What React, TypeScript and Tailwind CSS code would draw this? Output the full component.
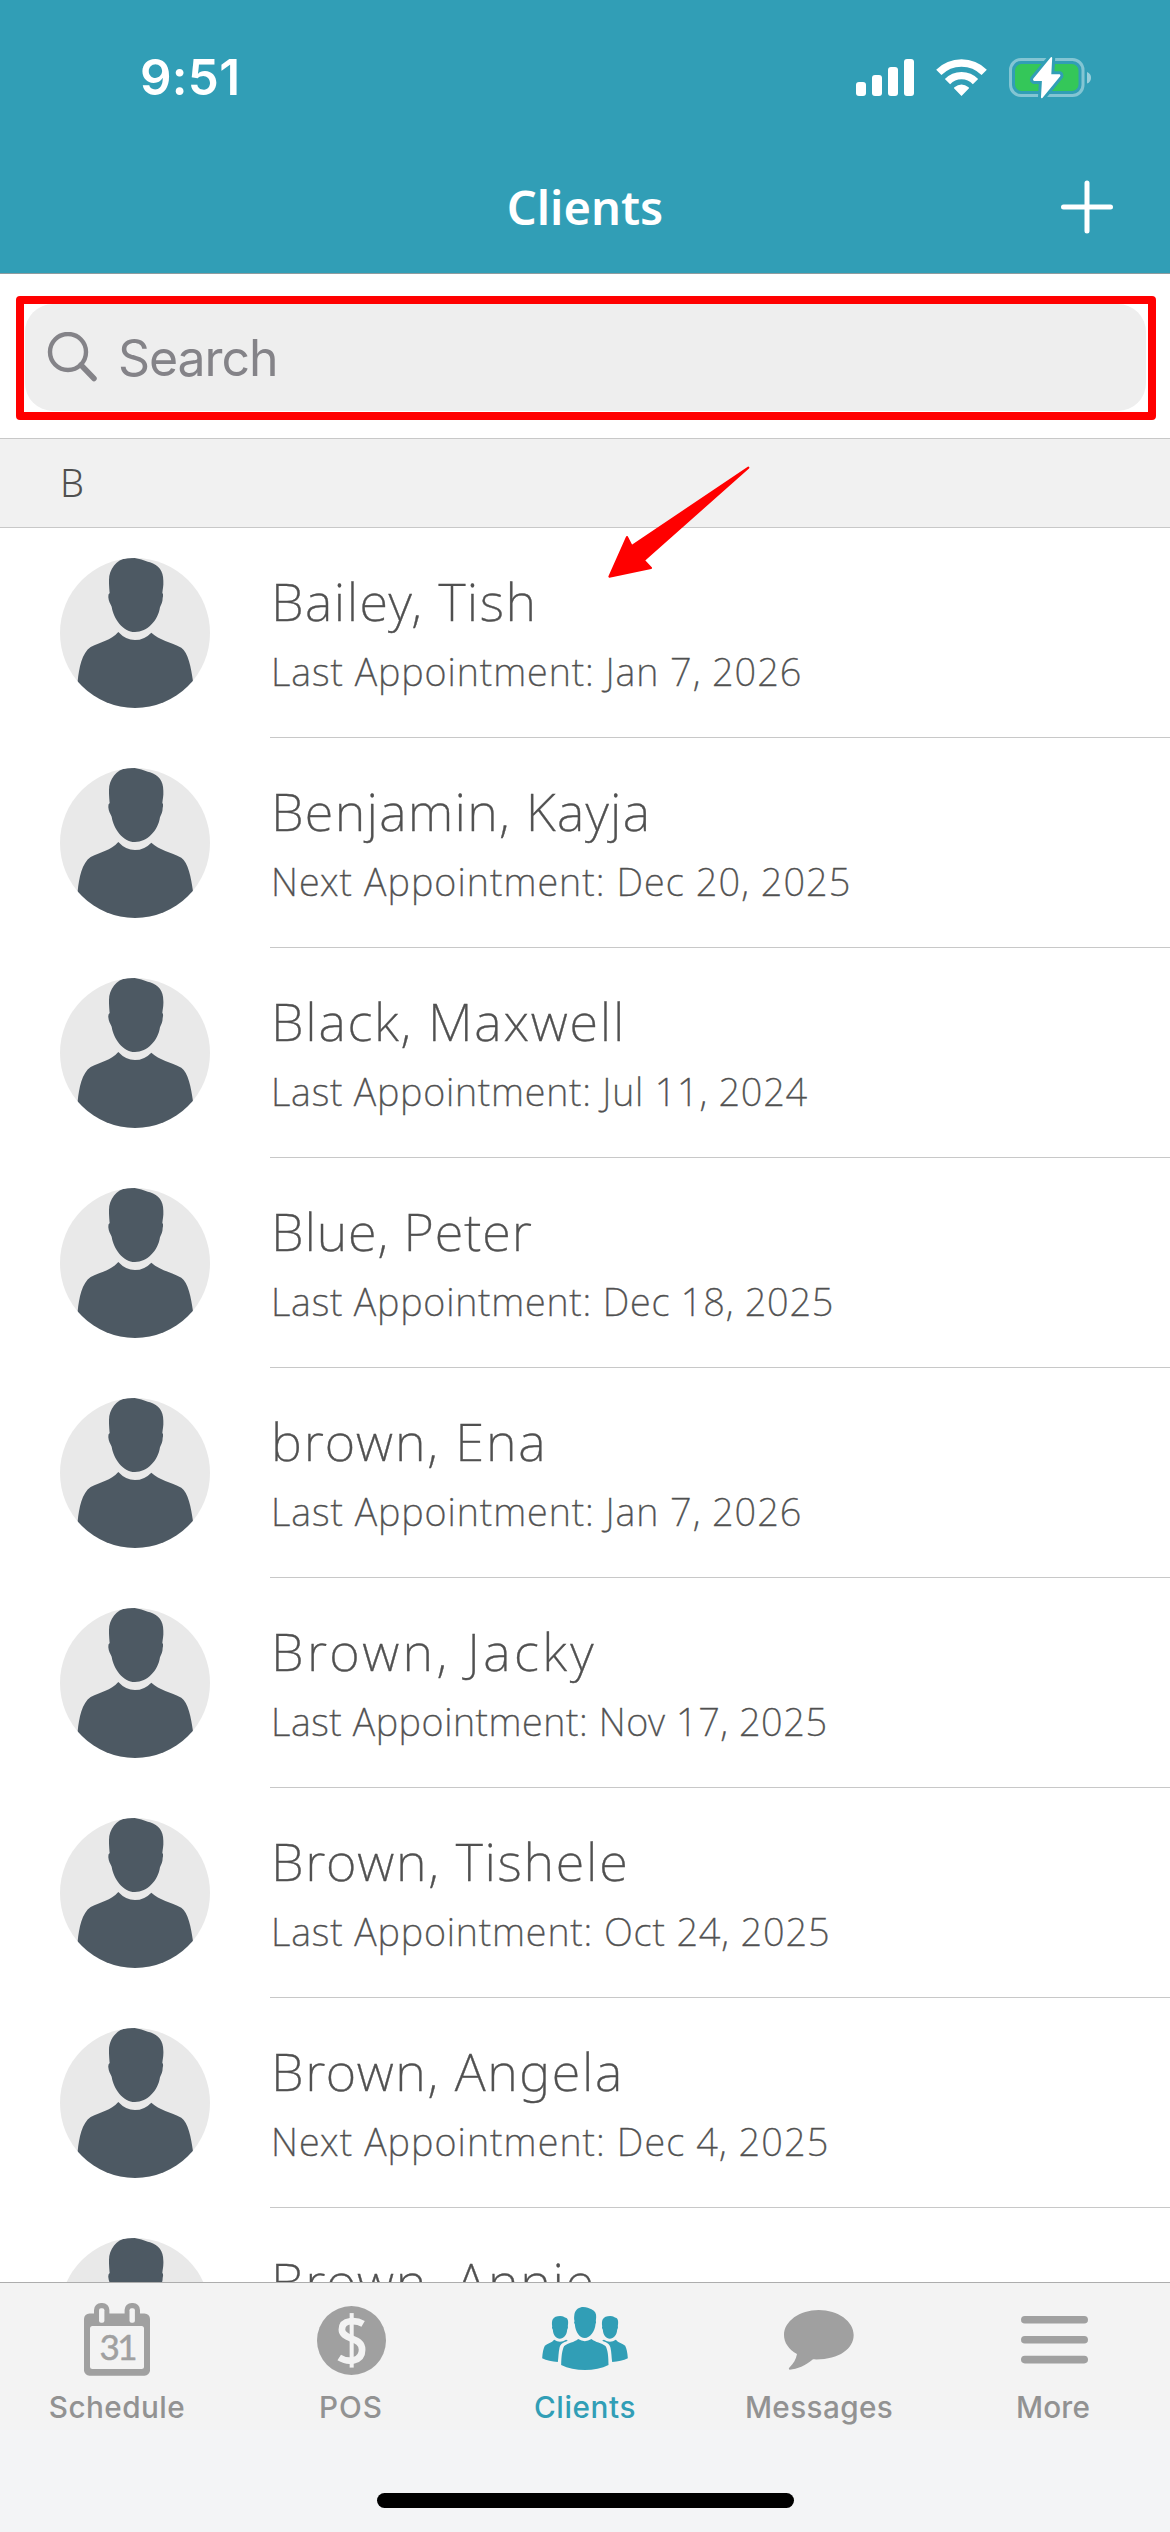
import React from 'react';

type Client = {
  name: string;
  nameTracking: string;
  detail: string;
  detailTracking: string;
};

const clients: Client[] = [
  { name: 'Bailey, Tish', nameTracking: 'tracking-[1.5px]', detail: 'Last Appointment: Jan 7, 2026', detailTracking: 'tracking-[0.96px]' },
  { name: 'Benjamin, Kayja', nameTracking: 'tracking-[1.3px]', detail: 'Next Appointment: Dec 20, 2025', detailTracking: 'tracking-[1.08px]' },
  { name: 'Black, Maxwell', nameTracking: 'tracking-[1.75px]', detail: 'Last Appointment: Jul 11, 2024', detailTracking: 'tracking-[0.78px]' },
  { name: 'Blue, Peter', nameTracking: 'tracking-[0.9px]', detail: 'Last Appointment: Dec 18, 2025', detailTracking: 'tracking-[0.8px]' },
  { name: 'brown, Ena', nameTracking: 'tracking-[1.9px]', detail: 'Last Appointment: Jan 7, 2026', detailTracking: 'tracking-[0.96px]' },
  { name: 'Brown, Jacky', nameTracking: 'tracking-[3.4px]', detail: 'Last Appointment: Nov 17, 2025', detailTracking: 'tracking-[0.58px]' },
  { name: 'Brown, Tishele', nameTracking: 'tracking-[1.75px]', detail: 'Last Appointment: Oct 24, 2025', detailTracking: 'tracking-[0.87px]' },
  { name: 'Brown, Angela', nameTracking: 'tracking-[1.6px]', detail: 'Next Appointment: Dec 4, 2025', detailTracking: 'tracking-[1.1px]' },
  { name: 'Brown, Annie', nameTracking: 'tracking-[1.7px]', detail: 'Last Appointment: Nov 3, 2025', detailTracking: 'tracking-[0.9px]' },
];

function SignalIcon() {
  return (
    <svg width="58" height="38" viewBox="0 0 58 38" fill="white">
      <rect x="0" y="23" width="10" height="14" rx="3" />
      <rect x="16" y="16" width="10" height="21" rx="3" />
      <rect x="32" y="8" width="10" height="29" rx="3" />
      <rect x="48" y="0" width="10" height="37" rx="3" />
    </svg>
  );
}

function WifiIcon() {
  return (
    <svg width="51" height="38" viewBox="0 0 51 38" fill="none">
      <path d="M2.8 13.4 A32 32 0 0 1 48.2 13.4" stroke="white" strokeWidth="7.4" />
      <path d="M11.5 22.6 A19.5 19.5 0 0 1 39.5 22.6" stroke="white" strokeWidth="7.4" />
      <path d="M25.5 37 L18.2 29.6 Q17.6 28.8 18.4 28.2 Q25.5 22.8 32.6 28.2 Q33.4 28.8 32.8 29.6 Z" fill="white" />
    </svg>
  );
}

function BatteryIcon() {
  const bolt = 'M43.2 1 L42.3 17.2 L50.6 17.2 Q52 18 51 19.6 L33.4 41 Q32 42 32 40 L32.9 24 L25 24 Q23.4 23 24.4 21.4 L41.6 0.6 Q43 -0.6 43.2 1 Z';
  return (
    <svg width="83" height="42" viewBox="0 0 83 42" fill="none">
      <rect x="1.5" y="2.5" width="72.5" height="36" rx="10.5" stroke="#83C5D3" strokeWidth="3" />
      <rect x="6" y="7" width="63.5" height="27" rx="6.5" fill="#34C759" />
      <path d="M78 15 Q82 16.5 82 20.7 Q82 25 78 26.5 Z" fill="#98CFDB" />
      <path d={bolt} fill="#319EB6" stroke="#319EB6" strokeWidth="6" />
      <path d={bolt} fill="white" />
    </svg>
  );
}

function Avatar() {
  return (
    <svg className="shrink-0" width="150" height="150" viewBox="0 0 450 450">
      <defs>
        <clipPath id="avatar-disc">
          <circle cx="225" cy="225" r="225" />
        </clipPath>
      </defs>
      <circle cx="225" cy="225" r="225" fill="#E9E9E9" />
      <g clipPath="url(#avatar-disc)" fill="#4D5963">
        <path d="M216 0 C238 0 252 8 270 13 C296 22 310 38 310 68 C311 84 308 94 307 105 Q311 108 308 120 C308 132 304 138 300 148 C294 188 262 222 225 222 C188 222 160 180 155 146 C150 136 146 130 145 118 Q144 108 149 105 C148 92 147 84 147 66 C147 34 170 4 200 1 Z" />
        <path d="M175 222 Q197 246 225 246 Q253 246 274 224 C298 246 332 252 364 269 C384 282 394 330 399 370 L399 450 L53 450 L53 370 C57 330 66 284 92 267 C122 252 152 248 175 222 Z" />
      </g>
    </svg>
  );
}

function CalendarIcon() {
  return (
    <svg className="mb-px" width="66" height="73" viewBox="0 0 66 73" fill="none">
      <rect x="0" y="10.5" width="66" height="62.2" rx="5.5" fill="#A0A0A0" />
      <rect x="10" y="0" width="15.4" height="24" rx="7" fill="#A0A0A0" />
      <rect x="40.6" y="0" width="15.4" height="24" rx="7" fill="#A0A0A0" />
      <rect x="15" y="5.2" width="5.4" height="14.6" rx="2" fill="#F3F3F3" />
      <rect x="45.5" y="5.2" width="5.4" height="14.6" rx="2" fill="#F3F3F3" />
      <rect x="6" y="23" width="54" height="43" rx="2.5" fill="#F3F3F3" />
      <text x="34.5" y="57" textAnchor="middle" fontSize="35" textLength="38" className="font-['Lato']" fill="#A0A0A0" stroke="#A0A0A0" strokeWidth="0.5">31</text>
    </svg>
  );
}

function PosIcon() {
  return (
    <svg width="69" height="69" viewBox="0 0 205 205" fill="none">
      <circle cx="102.500" cy="102.500" r="102.500" fill="#A0A0A0" />
      <path d="M137 53 C118 42 74 38 74 70 C74 102 134 90 134 130 C134 166 92 169 66 153" stroke="#F3F3F3" strokeWidth="20" />
      <path d="M103 21 V183" stroke="#F3F3F3" strokeWidth="12" />
    </svg>
  );
}

function ClientsIcon() {
  const head = 'M123 0 C134 0 140 4 148 7 C159 12 163 20 162 31 L161 42 Q163 45 160 52 C158 74 144 93 128 93 C112 93 100 76 98 52 Q94 48 97 42 C95 34 96 28 97 20 C101 6 112 0 123 0 Z';
  const side = 'M54 27 C64 27 66 31 73 33 C80 39 78 50 77 58 C78 61 77 65 75 68 C74 84 64 95 53 95 C42 95 33 84 32 68 Q28 63 30 58 C29 50 29 44 31 38 C35 30 44 27 54 27 Z';
  return (
    <svg className="mb-[3px]" width="86" height="63" viewBox="0 0 257 189" fill="#319EB6">
      <path d={head} />
      <path d={side} />
      <path d={side} transform="translate(150 0)" />
      <path d="M108 96 Q128 109 148 96 C160 106 178 108 190 117 C197 128 199 150 199 174 C160 194 97 194 57 174 C57 150 60 128 66 117 C78 108 96 106 108 96 Z" />
      <path d="M36 98 Q53 110 72 98 L77 101 C62 106 55 111 52 122 C49 136 49 150 47 165 Q20 164 0 154 C1 136 4 124 8 116 C16 109 29 107 36 98 Z" />
      <path d="M221 98 Q204 110 185 98 L180 101 C195 106 202 111 205 122 C208 136 208 150 210 165 Q237 164 257 154 C256 136 253 124 249 116 C241 109 228 107 221 98 Z" />
    </svg>
  );
}

function MessagesIcon() {
  return (
    <svg width="70" height="60" viewBox="0 0 210 180" fill="#A0A0A0">
      <path d="M104 0 C162 0 209 34 209 75 C209 118 162 151 87 148 C64 167 40 178 17 179 Q12 177 17 172 C29 160 36 148 39 132 C14 118 0 98 0 75 C0 34 47 0 104 0 Z" />
    </svg>
  );
}

function MoreIcon() {
  return (
    <svg className="ml-[3px]" width="67" height="48" viewBox="0 0 67 48" fill="#A0A0A0">
      <rect x="0" y="0" width="67" height="7.6" rx="3.8" />
      <rect x="0" y="20" width="67" height="7.6" rx="3.8" />
      <rect x="0" y="39.800" width="67" height="7.6" rx="3.8" />
    </svg>
  );
}

const tabs = [
  { label: 'Schedule', tracking: 'tracking-[0.44px]', icon: <CalendarIcon />, active: false },
  { label: 'POS', tracking: 'tracking-[1px]', icon: <PosIcon />, active: false },
  { label: 'Clients', tracking: 'tracking-[0.59px]', icon: <ClientsIcon />, active: true },
  { label: 'Messages', tracking: 'tracking-[0.38px]', icon: <MessagesIcon />, active: false },
  { label: 'More', tracking: 'tracking-[0.17px]', icon: <MoreIcon />, active: false },
];

function Header() {
  return (
    <header className="shrink-0 border-b border-[#8f9c9f] bg-[#319EB6] text-white">
      <div className="flex h-[140px] items-center justify-between pt-4 pr-[78px] pl-[140px]">
        <span className="text-[49.3px] leading-none font-semibold tracking-[0.3px] font-['Inter',sans-serif]">9:51</span>
        <div className="flex items-center">
          <SignalIcon />
          <div className="ml-[22px]"><WifiIcon /></div>
          <div className="ml-[22px]"><BatteryIcon /></div>
        </div>
      </div>
      <div className="grid h-[133px] grid-cols-[1fr_auto_1fr] items-center">
        <h1 className="col-start-2 text-[47px] leading-[60px] font-semibold font-['Noto_Sans',sans-serif]">Clients</h1>
        <svg className="mr-[56px] justify-self-end" width="54" height="54" viewBox="0 0 54 54">
          <path d="M27 3 V51 M3.500 27 H50.500" stroke="white" strokeWidth="5" strokeLinecap="round" />
        </svg>
      </div>
    </header>
  );
}

function SearchBar() {
  return (
    <div className="h-[164px] shrink-0 px-4 pt-[22px]">
      <div className="h-[124px] w-[1140px] rounded-[4px] border-8 border-[#FF0000] pr-[2px] pb-[1px] pl-[1px]">
        <div className="flex h-full items-center rounded-[28px] bg-[#EEEEEE] pl-[22px]">
          <svg width="51" height="51" viewBox="0 0 51 51" fill="none" stroke="#848388">
            <circle cx="21" cy="20" r="18" strokeWidth="4.4" />
            <path d="M34 33 L47 46.500" strokeWidth="5.500" strokeLinecap="round" />
          </svg>
          <span className="ml-[20px] text-[50px] leading-none tracking-[-1.07px] text-[#848388] font-['Inter',sans-serif]">Search</span>
        </div>
      </div>
    </div>
  );
}

function ClientRow({ client }: { client: Client }) {
  return (
    <li className="flex h-[210px] shrink-0 pl-[60px]">
      <div className="pt-[30px]"><Avatar /></div>
      <div className="ml-[60px] flex grow flex-col border-b border-[#C8C8C8] pt-[43px] pl-px text-[#505050] font-['Noto_Sans',sans-serif] font-extralight whitespace-nowrap [-webkit-text-stroke:0.4px_#505050]">
        <span className={`text-[52.4px] leading-[60px] ${client.nameTracking}`}>{client.name}</span>
        <span className={`mt-[18px] text-[37.9px] leading-[44px] ${client.detailTracking}`}>{client.detail}</span>
      </div>
    </li>
  );
}

function TabBar() {
  return (
    <nav className="shrink-0 border-t border-[#ADADAD] bg-[#F3F4F6]">
      <div className="grid h-[147px] grid-cols-5 bg-[#F3F3F3]">
        {tabs.map((tab) => (
          <div key={tab.label} className="flex flex-col items-center pt-[20px]">
            <div className="flex h-[74px] items-center">{tab.icon}</div>
            <span
              className={`mt-[10px] text-[29.7px] leading-[40px] font-medium font-['Inter',sans-serif] ${tab.tracking} ${tab.active ? 'text-[#319EB6]' : 'text-[#929292]'}`}
            >
              {tab.label}
            </span>
          </div>
        ))}
      </div>
      <div className="flex h-[102px] justify-center pt-[63px]">
        <div className="h-[15px] w-[417px] rounded-full bg-black" />
      </div>
    </nav>
  );
}

export default function App() {
  return (
    <div className="relative flex h-[2532px] w-[1170px] flex-col overflow-hidden bg-white">
      <Header />
      <SearchBar />
      <div className="flex h-[90px] shrink-0 items-center border-y border-[#C8C8C8] bg-[#F1F1F1] pl-[60px] text-[37.9px] leading-none font-light text-[#505050] font-['Noto_Sans',sans-serif]">
        B
      </div>
      <ul className="flex min-h-0 grow flex-col overflow-hidden">
        {clients.map((client) => (
          <ClientRow key={client.name} client={client} />
        ))}
      </ul>
      <TabBar />
      <svg className="absolute top-[460px] left-[600px]" width="160" height="125" viewBox="30 60 480 375">
        <path
          d="M58 410 L111 291 L125 318 L475 83 L162 361 L183 384 Z"
          fill="#FF0000"
          stroke="#FF0000"
          strokeWidth="6"
          strokeLinejoin="round"
        />
      </svg>
    </div>
  );
}
